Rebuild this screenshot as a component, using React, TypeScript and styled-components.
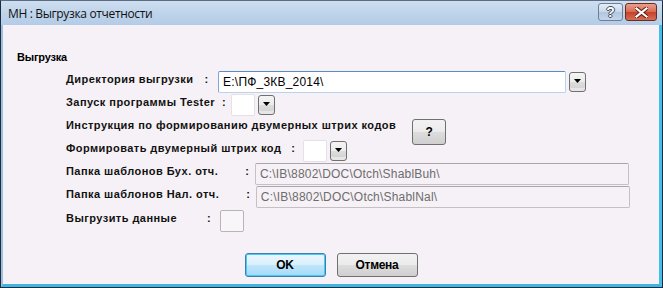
import styled, { createGlobalStyle } from "styled-components";

const GlobalStyle = createGlobalStyle`
    html, body {
        margin: 0;
        padding: 0;
        background: #f6f1f6;
    }
    * {
        box-sizing: border-box;
    }
`;

const App = () => {
    return (
        <>
            <GlobalStyle />
            <Window>
                <TitleBar>
                    <TitleText>МН : Выгрузка отчетности</TitleText>
                    <CaptionButtons>
                        <HelpButton>?</HelpButton>
                        <CloseButton>
                            <svg width="13" height="11" viewBox="0 0 13 11">
                                <path
                                    d="M1 1 L12 10 M12 1 L1 10"
                                    stroke="#5a1a12"
                                    strokeWidth="4"
                                    strokeLinecap="square"
                                />
                                <path
                                    d="M1.5 1.5 L11.5 9.5 M11.5 1.5 L1.5 9.5"
                                    stroke="#ffffff"
                                    strokeWidth="2.2"
                                    strokeLinecap="square"
                                />
                            </svg>
                        </CloseButton>
                    </CaptionButtons>
                </TitleBar>

                <Body>
                    <GroupTitle>Выгрузка</GroupTitle>

                    <Form>
                        <Row>
                            <Label>Директория выгрузки</Label>
                            <Colon $left={11} $right={10}>:</Colon>
                            <TextInput $width={348}>E:\ПФ_3КВ_2014\</TextInput>
                            <DropButton />
                        </Row>

                        <Row>
                            <Label>Запуск программы Tester</Label>
                            <Colon $left={7} $right={5}>:</Colon>
                            <SmallBox />
                            <DropButton />
                        </Row>

                        <Row>
                            <Label>Инструкция по формированию двумерных штрих кодов</Label>
                            <QuestionButton>?</QuestionButton>
                        </Row>

                        <Row>
                            <Label>Формировать двумерный штрих код</Label>
                            <Colon $left={10} $right={8}>:</Colon>
                            <SmallBox />
                            <DropButton />
                        </Row>

                        <Row>
                            <Label>Папка шаблонов Бух. отч.</Label>
                            <Colon $left={27} $right={6}>:</Colon>
                            <TextInput $width={374} $disabled>
                                C:\IB\8802\DOC\Otch\ShablBuh\
                            </TextInput>
                        </Row>

                        <Row>
                            <Label>Папка шаблонов Нал. отч.</Label>
                            <Colon $left={27} $right={6}>:</Colon>
                            <TextInput $width={374} $disabled>
                                C:\IB\8802\DOC\Otch\ShablNal\
                            </TextInput>
                        </Row>

                        <Row $top={1}>
                            <Label>Выгрузить данные</Label>
                            <Colon $left={30} $right={9}>:</Colon>
                            <SmallBox $disabled />
                        </Row>
                    </Form>

                    <ButtonBar>
                        <DialogButton $default>OK</DialogButton>
                        <DialogButton>Отмена</DialogButton>
                    </ButtonBar>
                </Body>
            </Window>
        </>
    );
};

export default App;

const DropButton = () => (
    <DropBox>
        <svg width="7" height="4" viewBox="0 0 7 4">
            <path d="M0 0 H7 L3.5 4 Z" fill="#000" />
        </svg>
    </DropBox>
);

const Window = styled.div`
    width: 663px;
    height: 288px;
    display: flex;
    flex-direction: column;
    background: #f6f1f6;
    border: 1px solid #1d2c3d;
    border-top-color: #5b6e86;
    font-family: "Liberation Sans", Arial, sans-serif;
    overflow: hidden;
`;

const TitleBar = styled.div`
    height: 24px;
    flex: none;
    display: flex;
    align-items: flex-start;
    justify-content: space-between;
    padding: 0 5px 0 7px;
    background: linear-gradient(to bottom, #cfdef0 0%, #bdd3ea 55%, #b4cce7 100%);
`;

const TitleText = styled.div`
    font-family: "Open Sans", "Noto Sans", sans-serif;
    font-size: 12px;
    letter-spacing: -0.35px;
    color: #111;
    line-height: 26px;
`;

const CaptionButtons = styled.div`
    display: flex;
    gap: 2px;
    padding-top: 2px;
`;

const HelpButton = styled.div`
    width: 25px;
    height: 18px;
    border: 1px solid #6d7f97;
    border-radius: 3px;
    background: linear-gradient(to bottom, #e4edf7 0%, #c8d8ea 48%, #b2c6de 52%, #c4d6ec 100%);
    display: flex;
    align-items: center;
    justify-content: center;
    font-family: "Liberation Sans", sans-serif;
    font-weight: bold;
    font-size: 14px;
    color: #ffffff;
    text-shadow: 1px 0 #3c4a5c, -1px 0 #3c4a5c, 0 1px #3c4a5c, 0 -1px #3c4a5c;
`;

const CloseButton = styled.div`
    width: 32px;
    height: 18px;
    border: 1px solid #6b2a22;
    border-radius: 3px;
    background: linear-gradient(to bottom, #e9a08c 0%, #d86a52 48%, #c7412a 52%, #d46e55 100%);
    display: flex;
    align-items: center;
    justify-content: center;
`;

const Body = styled.div`
    flex: 1;
    display: flex;
    flex-direction: column;
    border-left: 2px solid #9ebfe0;
    border-right: 3px solid #45bde9;
    border-bottom: 3px solid #3fb6e1;
    padding: 25px 0 0 14px;
`;

const GroupTitle = styled.div`
    font-size: 11px;
    font-weight: bold;
    color: #000;
    letter-spacing: -0.2px;
    line-height: 14px;
`;

const Form = styled.div`
    display: flex;
    flex-direction: column;
    padding: 7px 0 0 49px;
`;

const Row = styled.div<{ $top?: number }>`
    height: 23px;
    display: flex;
    align-items: flex-start;
    margin-top: ${(p) => p.$top ?? 0}px;
`;

const Label = styled.span`
    font-size: 11px;
    font-weight: bold;
    color: #111;
    letter-spacing: 0.45px;
    line-height: 14px;
    padding-top: 1px;
    white-space: nowrap;
`;

const Colon = styled.span<{ $left: number; $right: number }>`
    font-size: 11px;
    font-weight: bold;
    color: #111;
    line-height: 14px;
    padding-top: 1px;
    margin: 0 ${(p) => p.$right}px 0 ${(p) => p.$left}px;
`;

const TextInput = styled.div<{ $width: number; $disabled?: boolean }>`
    width: ${(p) => p.$width}px;
    height: 22px;
    padding: 0 4px;
    font-size: 12px;
    letter-spacing: 0.2px;
    line-height: 20px;
    color: ${(p) => (p.$disabled ? "#6d6d6d" : "#000")};
    background: ${(p) => (p.$disabled ? "#f6f1f6" : "#ffffff")};
    border: 1px solid ${(p) => (p.$disabled ? "#c4c0c4" : "#b8d4ea")};
    border-top-color: ${(p) => (p.$disabled ? "#aaa6aa" : "#5d8cc0")};
    border-left-color: ${(p) => (p.$disabled ? "#c4c0c4" : "#7fa7d4")};
    border-radius: 2px;
    white-space: nowrap;
`;

const SmallBox = styled.div<{ $disabled?: boolean }>`
    width: 24px;
    height: 22px;
    background: ${(p) => (p.$disabled ? "#f9f6f9" : "#ffffff")};
    border: 1px solid ${(p) => (p.$disabled ? "#b8b4b8" : "#e4e0e6")};
    border-radius: 2px;
`;

const DropBox = styled.div`
    width: 17px;
    height: 20px;
    margin: 1px 0 0 3px;
    border: 1px solid #707070;
    border-radius: 3px;
    background: linear-gradient(to bottom, #f4f4f4 0%, #ebebeb 50%, #dddddd 51%, #cfcfcf 100%);
    box-shadow: inset 0 -3px 0 #e6e6e6;
    display: flex;
    align-items: center;
    justify-content: center;
    padding-bottom: 2px;
`;

const QuestionButton = styled.div`
    width: 34px;
    height: 26px;
    margin: 2px 0 0 16px;
    border: 1px solid #707070;
    border-radius: 3px;
    background: linear-gradient(to bottom, #f2f2f2 0%, #ebebeb 50%, #dddddd 51%, #cfcfcf 100%);
    display: flex;
    align-items: center;
    justify-content: center;
    font-size: 12px;
    font-weight: bold;
    color: #000;
`;

const ButtonBar = styled.div`
    display: flex;
    justify-content: center;
    gap: 11px;
    padding: 20px 14px 0 0;
`;

const DialogButton = styled.div<{ $default?: boolean }>`
    width: 81px;
    height: 24px;
    border: 1px solid ${(p) => (p.$default ? "#3c7fb1" : "#707070")};
    border-radius: 3px;
    background: ${(p) =>
        p.$default
            ? "linear-gradient(to bottom, #eaf6fd 0%, #d9f0fc 50%, #bee6fd 51%, #a7d9f5 100%)"
            : "linear-gradient(to bottom, #f2f2f2 0%, #ebebeb 50%, #dddddd 51%, #cfcfcf 100%)"};
    box-shadow: ${(p) => (p.$default ? "inset 0 0 0 1px #48c8f6" : "none")};
    display: flex;
    align-items: center;
    justify-content: center;
    font-size: 12px;
    font-weight: bold;
    letter-spacing: -0.3px;
    color: #000;
`;
